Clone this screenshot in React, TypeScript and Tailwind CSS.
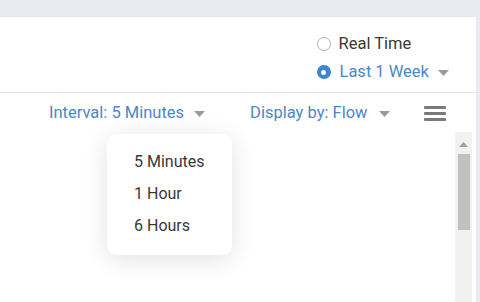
import React from "react";

function Caret({ className = "" }: { className?: string }) {
  return (
    <svg width="11" height="6" viewBox="0 0 11 6" className={className}>
      <path d="M0 0 L11 0 L5.5 6 Z" fill="#9a9a9a" />
    </svg>
  );
}

export default function App() {
  return (
    <div
      className="w-[480px] h-[302px] bg-[#e8ebf2] flex flex-col overflow-hidden"
      style={{ fontFamily: "Roboto, 'Liberation Sans', sans-serif" }}
    >
      <div className="h-[17px] shrink-0" />
      <div className="flex-1 mr-[4px] bg-white flex flex-col relative">
        {/* header */}
        <div className="h-[76px] shrink-0 border-b border-[#e4e4e4] flex justify-end pr-[27px] pt-[17px]">
          <div className="flex flex-col gap-[8px]">
            <div className="flex items-center h-[20px]">
              <span className="w-[14px] h-[14px] rounded-full border-[1.5px] border-[#b0b0b0] bg-white ml-[1px]" />
              <span className="ml-[8px] text-[16.5px] text-[#383838]">Real Time</span>
            </div>
            <div className="flex items-center h-[20px]">
              <span className="w-[14px] h-[14px] rounded-full bg-[#3d86c9] flex items-center justify-center ml-[1px]">
                <span className="w-[5px] h-[5px] rounded-full bg-white" />
              </span>
              <span className="ml-[9px] text-[16.5px] text-[#4a88c8]">Last 1 Week</span>
              <Caret className="ml-[9px] mt-[2px]" />
            </div>
          </div>
        </div>
        {/* toolbar */}
        <div className="h-[39px] shrink-0 flex items-center pl-[49px] pr-[30px] pt-[1px]">
          <span className="text-[16.5px] text-[#4a88c8]">Interval: 5 Minutes</span>
          <Caret className="ml-[10px] mt-[2px]" />
          <span className="ml-[45px] text-[16.5px] text-[#4a88c8]">Display by: Flow</span>
          <Caret className="ml-[11px] mt-[2px]" />
          <div className="ml-auto flex flex-col gap-[3px] w-[22px]">
            <span className="h-[3px] bg-[#7a7a7a] rounded-[1px]" />
            <span className="h-[3px] bg-[#7a7a7a] rounded-[1px]" />
            <span className="h-[3px] bg-[#7a7a7a] rounded-[1px]" />
          </div>
        </div>
        {/* content */}
        <div className="flex-1 flex">
          <div className="flex-1" />
          <div className="w-[17px] mr-[4px] bg-[#f1f1f1] flex flex-col items-center">
            <svg width="9" height="5" viewBox="0 0 9 5" className="mt-[10px]">
              <path d="M0 5 L9 5 L4.5 0 Z" fill="#a3a3a3" />
            </svg>
            <div className="w-[12px] h-[76px] bg-[#c1c1c1] mt-[7px]" />
          </div>
        </div>
        {/* dropdown */}
        <div className="absolute left-[107px] top-[117px] w-[125px] h-[121px] bg-white rounded-[10px] shadow-[0_4px_24px_rgba(0,0,0,0.12)] flex flex-col pl-[27px] pt-[18px] gap-[12px]">
          <span className="text-[16px] text-[#383838] leading-[20px]">5 Minutes</span>
          <span className="text-[16px] text-[#383838] leading-[20px]">1 Hour</span>
          <span className="text-[16px] text-[#383838] leading-[20px]">6 Hours</span>
        </div>
      </div>
    </div>
  );
}
